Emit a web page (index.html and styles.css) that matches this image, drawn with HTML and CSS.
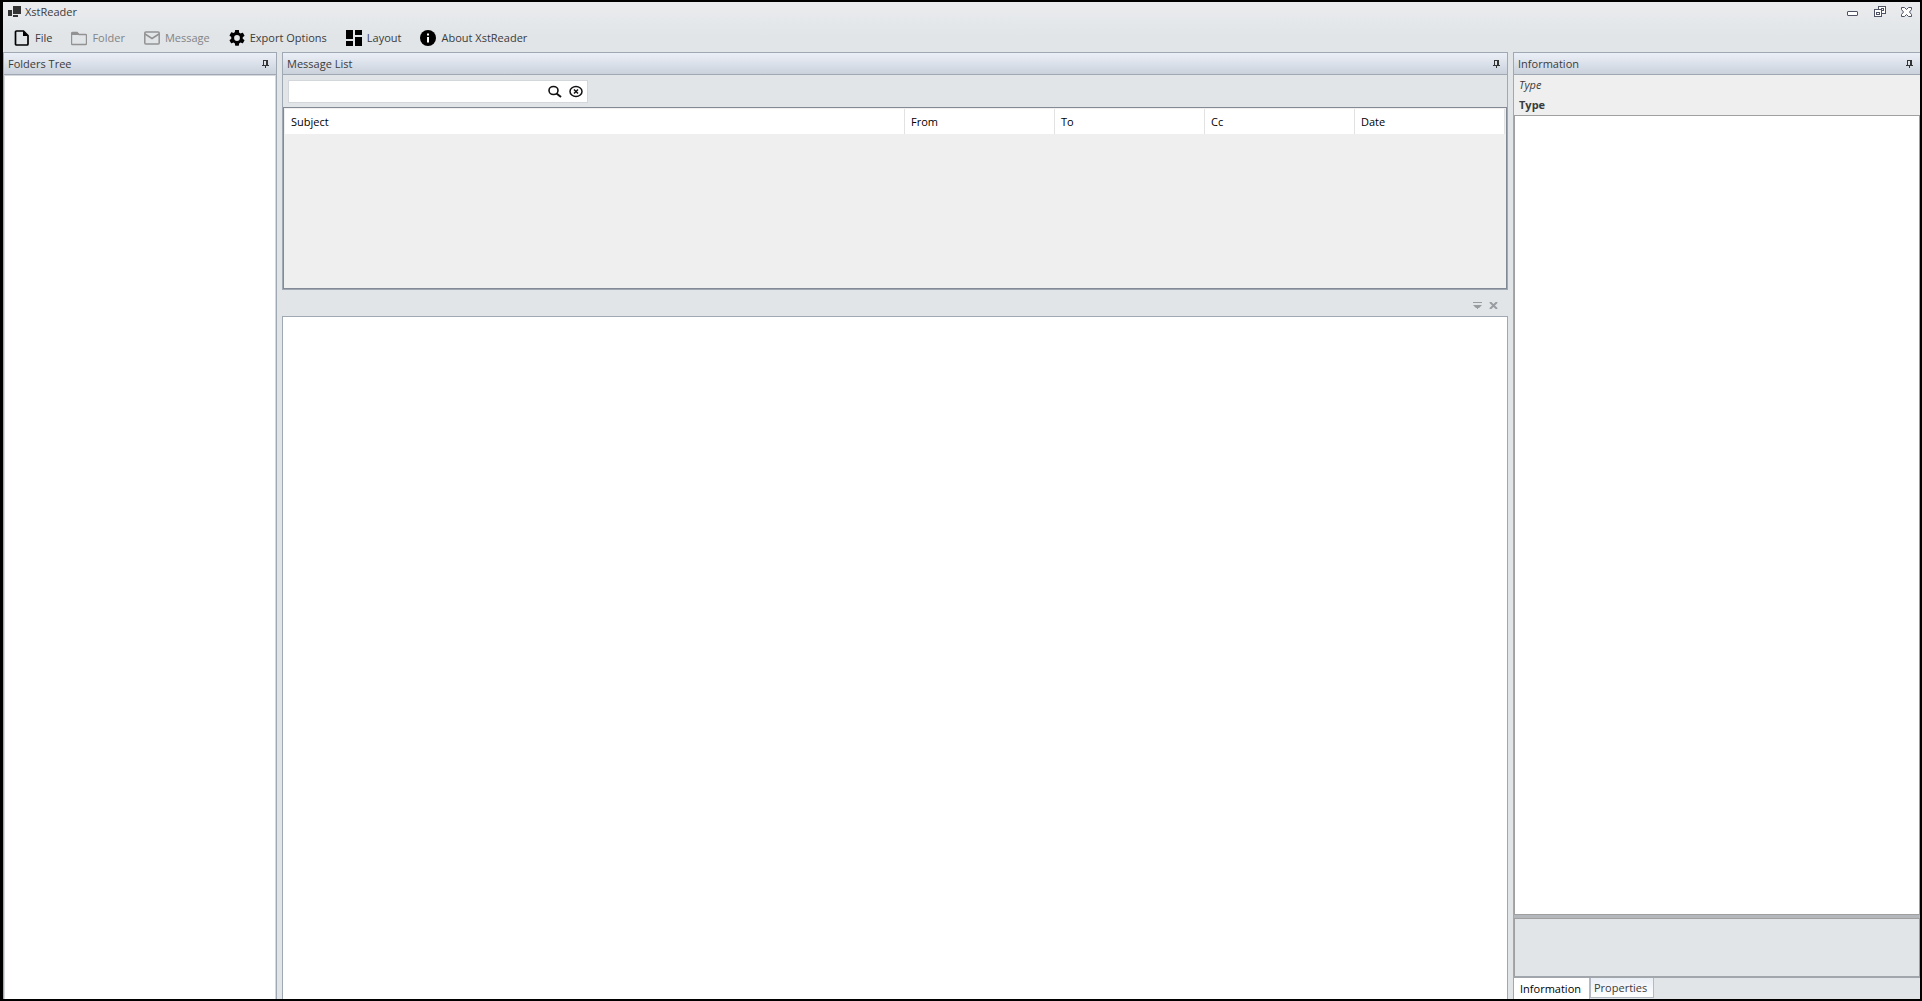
FILE: index.html
```html
<!DOCTYPE html>
<html lang="en">
<head>
    <meta charset="UTF-8">
    <title>XstReader</title>
    <link rel="stylesheet" href="styles.css">
</head>
<body>
    <svg class="defs" width="0" height="0">
        <symbol id="pin" viewBox="0 0 7 8">
            <path d="M1 0h5v5h1v1H4v2H3V6H0V5h1zM2 1v4h2V1z" fill="#333"/>
        </symbol>
    </svg>

    <header class="titlebar">
        <svg class="app-icon" width="13" height="12" viewBox="0 0 13 12">
            <path d="M5 0h8v8H5zM0 4h4v6H0zM5 9h5v2H5z" fill="#333"/>
        </svg>
        <h1>XstReader</h1>
        <div class="window-buttons">
            <button type="button" aria-label="Minimize">
                <svg width="12" height="12" viewBox="0 0 12 12"><rect x="0.500" y="5.500" width="10" height="4" rx="0.500" fill="#fff" stroke="#4d5264"/></svg>
            </button>
            <button type="button" aria-label="Restore">
                <svg width="12" height="12" viewBox="0 0 12 12">
                    <g fill="#fff" stroke="#4d5264"><rect x="4.500" y="0.500" width="7" height="7"/><rect x="7.500" y="2.500" width="2" height="2"/><rect x="0.500" y="3.500" width="7" height="7"/><rect x="2.500" y="6.500" width="3" height="2"/></g>
                </svg>
            </button>
            <button type="button" aria-label="Close">
                <svg width="12" height="12" viewBox="0 0 12 12"><path d="M.5 1.500h3l2 2 2-2h3v2l-2 2.500 2 2.500v2h-3l-2-2-2 2h-3v-2l2-2.500-2-2.500z" fill="#fff" stroke="#4d5264"/></svg>
            </button>
        </div>
    </header>

    <nav class="toolbar">
        <button type="button">
            <svg width="16" height="16" viewBox="0 0 16 16"><path d="M2.500 1h7L14 5.500V14a1 1 0 0 1-1 1H2.500a1 1 0 0 1-1-1V2a1 1 0 0 1 1-1z" fill="none" stroke="#000" stroke-width="1.700"/><path d="M9 1v5h5z"/></svg>
            File
        </button>
        <button type="button" disabled>
            <svg width="16" height="16" viewBox="0 0 16 16"><path d="M1.500 2.500h4.500l2 2h6.500a1 1 0 0 1 1 1v8a1 1 0 0 1-1 1h-13a1 1 0 0 1-1-1v-10a1 1 0 0 1 1-1z" fill="none" stroke="#929292" stroke-width="1.400"/><path d="M1 2h5l2 3H1z" fill="#929292"/></svg>
            Folder
        </button>
        <button type="button" disabled>
            <svg width="16" height="16" viewBox="0 0 16 16"><g fill="none" stroke="#929292" stroke-width="1.500"><rect x="0.800" y="2" width="14.400" height="12" rx="1"/><path d="M1 4l7 4.500L15 4"/></g></svg>
            Message
        </button>
        <button type="button">
            <svg width="16" height="16" viewBox="2 2 20 20"><path d="M19.140 12.940c.04-.3.060-.61.060-.94s-.02-.64-.07-.94l2.030-1.580a.49.490 0 0 0 .12-.61l-1.920-3.320a.49.490 0 0 0-.59-.22l-2.390.96a7 7 0 0 0-1.620-.94l-.36-2.540A.48.480 0 0 0 13.920 2h-3.840c-.24 0-.43.170-.47.410l-.36 2.540a7.400 7.400 0 0 0-1.620.94l-2.390-.96a.48.480 0 0 0-.59.220L2.740 8.470a.48.480 0 0 0 .12.610l2.030 1.580a6 6 0 0 0 0 2.280l-2.030 1.580a.49.490 0 0 0-.12.610l1.920 3.320c.12.220.37.290.59.220l2.390-.96c.5.380 1.030.7 1.620.94l.36 2.540c.05.240.24.410.48.410h3.840c.24 0 .44-.17.470-.41l.36-2.540a7.400 7.400 0 0 0 1.620-.94l2.390.96c.22.080.47 0 .59-.22l1.920-3.320a.48.480 0 0 0-.12-.61zM12 15.600a3.600 3.600 0 1 1 0-7.200 3.600 3.600 0 0 1 0 7.200z"/></svg>
            Export Options
        </button>
        <button type="button">
            <svg width="16" height="16" viewBox="0 0 16 16"><path d="M0 0h7v9H0zM0 11h7v5H0zM9 0h7v5H9zM9 7h7v9H9z"/></svg>
            Layout
        </button>
        <button type="button">
            <svg width="16" height="16" viewBox="0 0 16 16"><circle cx="8" cy="8" r="8"/><path d="M7 3.500h2v2H7zM7 7h2v5.500H7z" fill="#fff"/></svg>
            About XstReader
        </button>
    </nav>

    <main class="workspace">
        <section class="panel folders">
            <h2>Folders Tree <svg width="7" height="8"><use href="#pin"/></svg></h2>
            <div class="tree"></div>
        </section>

        <div class="center">
            <section class="panel messages">
                <h2>Message List <svg width="7" height="8"><use href="#pin"/></svg></h2>
                <form class="search">
                    <input type="text" aria-label="Search messages">
                    <button type="button" aria-label="Search">
                        <svg width="14" height="14" viewBox="0 0 14 14"><g fill="none" stroke="#111"><ellipse cx="5.500" cy="5.500" rx="4.500" ry="4" stroke-width="1.600"/><path d="M8.500 8.500l4.500 3.500" stroke-width="2"/></g></svg>
                    </button>
                    <button type="button" aria-label="Clear search">
                        <svg width="14" height="14" viewBox="0 0 14 14"><g fill="none" stroke="#111" stroke-width="1.500"><ellipse cx="7" cy="6.500" rx="6" ry="5"/><path d="M5 4.500l4 4M9 4.500l-4 4"/></g></svg>
                    </button>
                </form>
                <div class="grid">
                    <table>
                        <thead>
                            <tr>
                                <th>Subject</th>
                                <th class="field">From</th>
                                <th class="field">To</th>
                                <th class="field">Cc</th>
                                <th class="field">Date</th>
                            </tr>
                        </thead>
                    </table>
                </div>
            </section>
            <div class="doc-strip">
                <button type="button" aria-label="Open documents">
                    <svg width="9" height="7" viewBox="0 0 9 7"><path d="M0 0h9v1H0zM0 3h9L6 6H5v1H4V6H3z" fill="#999da1"/></svg>
                </button>
                <button type="button" aria-label="Close document">
                    <svg width="9" height="7" viewBox="0 0 9 7"><path d="M1 0l7 7M8 0L1 7" stroke="#999da1" stroke-width="2"/></svg>
                </button>
            </div>
            <div class="document"></div>
        </div>

        <section class="panel info">
            <h2>Information <svg width="7" height="8"><use href="#pin"/></svg></h2>
            <div class="item-type">
                <em>Type</em>
                <strong>Type</strong>
            </div>
            <div class="properties"></div>
            <div class="splitter"></div>
            <div class="description"></div>
            <div class="tabs">
                <button type="button" class="active">Information</button>
                <button type="button">Properties</button>
            </div>
        </section>
    </main>
</body>
</html>
```

FILE: styles.css
```css
* {
    box-sizing: border-box;
}

body {
    margin: 0;
    height: 100vh;
    display: flex;
    flex-direction: column;
    border: 2px solid #000;
    border-left-width: 3px;
    background: linear-gradient(#ebecee, #e1e5e8 36px);
    font-family: "Open Sans", "Segoe UI", sans-serif;
    font-size: 11px;
    line-height: 16px;
    color: #3b3b3b;
    overflow: hidden;
}

.defs {
    position: absolute;
}

button {
    display: flex;
    align-items: center;
    padding: 0;
    border: 0;
    background: none;
    font: inherit;
    color: inherit;
}

h1, h2 {
    margin: 0;
    font-size: inherit;
    font-weight: normal;
}

/* title bar */
.titlebar {
    display: flex;
    align-items: center;
    height: 20px;
    padding: 0 7px 0 5px;
}

.app-icon {
    margin-right: 4px;
}

.window-buttons {
    display: flex;
    gap: 15px;
    margin-left: auto;
}

/* toolbar */
.toolbar {
    display: flex;
    gap: 19px;
    height: 30px;
    padding: 2px 11px 0;
}

.toolbar button {
    gap: 5px;
}

.toolbar button:disabled {
    color: #828486;
}

/* panels */
.workspace {
    flex: 1;
    display: flex;
    gap: 5px;
    min-height: 0;
}

.panel {
    display: flex;
    flex-direction: column;
    border: 1px solid #a0a8b4;
    border-bottom: 0;
}

.panel h2 {
    display: flex;
    align-items: center;
    justify-content: space-between;
    flex: none;
    height: 22px;
    padding: 0 7px 0 4px;
    border-bottom: 1px solid #a0a8b4;
    background: linear-gradient(#ebeff8, #cbd2db);
}

.folders {
    flex: none;
    width: 274px;
}

.tree {
    flex: 1;
    border: 1px solid #d5d8dc;
    border-bottom: 0;
    background: #fff;
}

.center {
    flex: 1;
    display: flex;
    flex-direction: column;
    min-width: 0;
}

.messages {
    flex: none;
    height: 238px;
    border-bottom: 1px solid #a0a8b4;
}

.search {
    display: flex;
    align-items: center;
    gap: 7px;
    width: 300px;
    height: 23px;
    margin: 5px 5px 4px;
    padding-right: 4px;
    border: 1px solid #d3d6da;
    background: #fff;
}

.search input {
    flex: 1;
    min-width: 0;
    border: 0;
    outline: none;
    background: none;
    font: inherit;
}

.grid {
    flex: 1;
    padding: 1px 1px 0;
    border: 1px solid #838a95;
    background: #efefef;
}

table {
    width: 100%;
    table-layout: fixed;
    border-collapse: collapse;
    background: #fff;
}

th {
    height: 25px;
    padding: 0 6px;
    border-right: 1px solid #e2e2e2;
    font-weight: normal;
    text-align: left;
    color: #000;
}

th.field {
    width: 150px;
}

.doc-strip {
    display: flex;
    align-items: center;
    justify-content: flex-end;
    gap: 7px;
    height: 26px;
    padding: 4px 10px 0 0;
}

.document {
    flex: 1;
    border: 1px solid #a0a8b4;
    border-bottom: 0;
    background: #fff;
}

/* information */
.info {
    flex: none;
    width: 407px;
    border-right: 0;
}

.item-type {
    display: flex;
    flex-direction: column;
    gap: 4px;
    padding: 2px 5px;
    background: #efefef;
}

.properties {
    flex: 1;
    border: 1px solid #a0a0a0;
    background: #fff;
}

.splitter {
    height: 3px;
    background: #b4b8bc;
}

.description {
    height: 60px;
    border: 1px solid #a0a0a0;
    border-bottom: 2px solid #a0a6ab;
}

.tabs {
    display: flex;
    align-items: flex-start;
    height: 21px;
}

.tabs button {
    height: 20px;
    padding: 0 6px 0 3px;
    border: 1px solid #b4bac3;
    border-top: 0;
    background: linear-gradient(#eaeff6, #fff);
}

.tabs .active {
    height: 21px;
    padding: 0 8px 0 6px;
    border-width: 0 1px 0 0;
    background: #fff;
    color: #000;
}
```
